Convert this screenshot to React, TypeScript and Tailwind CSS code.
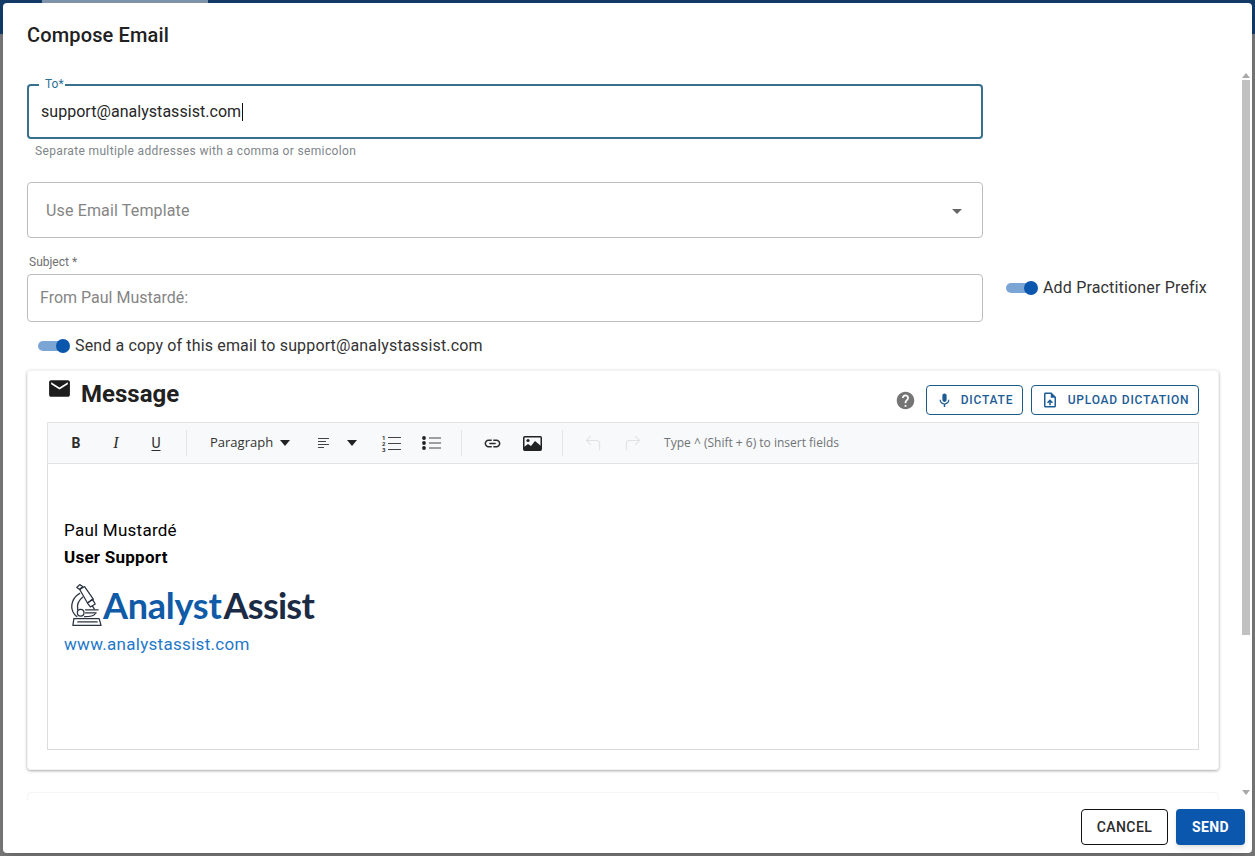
import type { ReactNode } from "react";
import { CornerUpLeft, CornerUpRight } from "lucide-react";
import {
  MdArrowDropDown,
  MdEmail,
  MdHelp,
  MdLink,
  MdMic,
  MdOutlineUploadFile,
} from "react-icons/md";

const Toggle = () => (
  <span className="relative flex h-[14px] w-[32px] shrink-0 items-center">
    <span className="h-[10px] w-[30px] rounded-full bg-[#7ba5d4]" />
    <span className="absolute right-0 top-0 h-[14px] w-[14px] rounded-full bg-[#0b57ad]" />
  </span>
);

const Divider = () => <span className="mx-[10px] h-[26px] w-px bg-[#e2e3e5]" />;

const ToolButton = ({ children }: { children: ReactNode }) => (
  <span className="flex h-10 w-10 items-center justify-center text-[#2b2b2b]">{children}</span>
);

const Caret = () => <span className="h-0 w-0 border-x-[5px] border-t-[6px] border-x-transparent border-t-[#222]" />;

const AlignIcon = () => (
  <svg width="12" height="10" viewBox="0 0 12 10" stroke="#444" strokeWidth="1">
    <path d="M0 .5h11M0 3.5h8M0 6.5h11M0 9.5h6" />
  </svg>
);

const NumberedIcon = () => (
  <svg width="19" height="17" viewBox="0 0 19 17">
    <text x="0" y="5" fontSize="6" fontWeight="700" fill="#333" fontFamily="Roboto, sans-serif">1</text>
    <text x="0" y="11" fontSize="6" fontWeight="700" fill="#333" fontFamily="Roboto, sans-serif">2</text>
    <text x="0" y="17" fontSize="6" fontWeight="700" fill="#333" fontFamily="Roboto, sans-serif">3</text>
    <path d="M6 2.500h13M6 8.500h13M6 14.500h13" stroke="#444" strokeWidth="1" />
  </svg>
);

const BulletIcon = () => (
  <svg width="19" height="14" viewBox="0 0 19 14">
    <circle cx="2" cy="2" r="1.9" fill="#222" />
    <circle cx="2" cy="7" r="1.9" fill="#222" />
    <circle cx="2" cy="12" r="1.9" fill="#222" />
    <path d="M7 2h12M7 7h12M7 12h12" stroke="#444" strokeWidth="1" />
  </svg>
);

const ImageIcon = () => (
  <svg width="19" height="15" viewBox="0 0 19 15">
    <rect x=".75" y=".75" width="17.5" height="13.5" rx="1" fill="none" stroke="#222" strokeWidth="1.5" />
    <circle cx="5" cy="4.5" r="1.6" fill="#222" />
    <path d="M1 14v-3l4-3 3 2 4-5 6 5v4z" fill="#222" />
  </svg>
);

const Microscope = () => (
  <svg width="33" height="46" viewBox="0 0 34 46" fill="none" stroke="#2b3442" strokeWidth="1.3" strokeLinejoin="round" strokeLinecap="round">
    <path d="M7 5l3-3 3 2-3 3z" />
    <path d="M10 7l5-3 9 13-6 4z" />
    <path d="M18 21l5-4 3 5-5 3z" />
    <path d="M23 24l2 3" />
    <path d="M10 11C3 15 0 23 3 30c1 2 2 4 4 5" />
    <path d="M13 15c-4 3-6 8-5 13" />
    <circle cx="11" cy="31" r="3.4" />
    <path d="M16 28h13M16 31h11" />
    <path d="M15 35c4 0 9 0 11-3" />
    <path d="M4 37h26l2 7H3z" />
    <path d="M8 40.500h20" />
  </svg>
);

const App = () => {
  return (
    <div className="relative h-[856px] w-full overflow-hidden bg-[#777777] p-[3px] font-['Roboto',sans-serif]">
      <div className="absolute inset-x-0 top-0 h-[34px] bg-[#123a66]" />
      <div className="absolute left-[42px] top-0 h-[3px] w-[166px] bg-[#7f93a8]" />

      <div className="relative flex h-[850px] flex-col rounded-[4px] bg-white shadow-lg">
        <header className="flex h-[67px] shrink-0 items-start pl-6 pt-[20px]">
          <h1 className="text-[20px] font-medium leading-6 tracking-[0.15px] text-[#212121]">Compose Email</h1>
        </header>

        <div className="flex h-[730px] shrink-0 overflow-hidden">
          <div className="flex-1 pl-6 pr-[21px]">
            <div className="flex items-start">
              <div className="w-[956px] pt-[14px]">
                <div className="relative flex h-[55px] items-center rounded-[4px] border-2 border-[#38708f] px-3 pt-[1px]">
                  <span className="absolute -top-[9px] left-[10px] bg-white pl-[6px] pr-[1px] text-xs leading-[14px] text-[#2f6f97]">To*</span>
                  <span className="text-base tracking-[0.04px] text-[#262626]">support@analystassist.com</span>
                  <span className="ml-px h-[18px] w-px bg-[#111]" />
                </div>
                <p className="mt-[5px] pl-2 text-xs leading-[14px] tracking-[0.35px] text-[#80858a]">
                  Separate multiple addresses with a comma or semicolon
                </p>
                <div className="mt-[24px] flex h-[56px] items-center justify-between rounded-[4px] border border-[#bdbdbd] pl-[18px] pr-[13px] pt-[1px]">
                  <span className="text-base tracking-[0.15px] text-[#858585]">Use Email Template</span>
                  <MdArrowDropDown className="text-[24px] text-[#666]" />
                </div>
                <p className="mt-[17px] pl-[2px] text-xs leading-[14px] text-[#707070]">Subject *</p>
                <div className="mt-[5px] flex h-[48px] items-center rounded-[4px] border border-[#bdbdbd] px-3">
                  <span className="text-base text-[#858585]">From Paul Mustardé:</span>
                </div>
              </div>
              <label className="ml-[23px] mt-[206px] flex items-center gap-[5px] text-base tracking-[0.17px] text-[#333]">
                <Toggle />
                <span className="whitespace-nowrap">Add Practitioner Prefix</span>
              </label>
            </div>

            <label className="ml-[11px] mt-[14px] flex h-[19px] items-center gap-[5px] text-base tracking-[0.15px] text-[#333]">
              <Toggle />
              <span>Send a copy of this email to support@analystassist.com</span>
            </label>

            <section className="mt-[15px] h-[400px] w-[1192px] rounded-[4px] border border-[#f3f3f3] px-[19px] shadow-[0_1px_3px_rgba(0,0,0,0.35)]">
              <div className="flex h-[51px] items-start">
                <MdEmail className="mt-[5px] text-[25px] text-[#1c1c1c]" />
                <h2 className="ml-[9px] mt-[7px] text-2xl font-bold leading-8 text-[#212121]">Message</h2>
                <MdHelp className="ml-auto mt-[19px] text-[21px] text-[#757575]" />
                <button className="ml-[10px] mt-[14px] flex h-[30px] w-[97px] items-center justify-center gap-[8px] rounded-[4px] border border-[#1c5a84] text-xs font-medium tracking-[0.8px] text-[#1d5c94]">
                  <MdMic className="text-[17px]" />
                  DICTATE
                </button>
                <button className="ml-2 mt-[14px] flex h-[30px] w-[168px] items-center justify-center gap-[9px] rounded-[4px] border border-[#1c5a84] text-xs font-medium tracking-[0.8px] text-[#1d5c94]">
                  <MdOutlineUploadFile className="text-[18px]" />
                  UPLOAD DICTATION
                </button>
              </div>

              <div className="flex h-[42px] items-center border border-[#e2e3e5] bg-[#f8f9fa] pl-2">
                <ToolButton><span className="text-sm font-bold">B</span></ToolButton>
                <ToolButton><span className="font-['Liberation_Serif',serif] text-base italic">I</span></ToolButton>
                <ToolButton><span className="text-sm underline underline-offset-2">U</span></ToolButton>
                <Divider />
                <span className="flex h-10 items-center gap-[7px] pl-[13px] font-['Open_Sans',sans-serif] text-[13px] text-[#333]">
                  Paragraph <Caret />
                </span>
                <span className="ml-[28px] flex items-center"><AlignIcon /></span>
                <span className="ml-[17px] flex items-center"><Caret /></span>
                <span className="ml-[14px]" />
                <ToolButton><NumberedIcon /></ToolButton>
                <ToolButton><BulletIcon /></ToolButton>
                <Divider />
                <ToolButton><MdLink className="text-[19px]" /></ToolButton>
                <ToolButton><ImageIcon /></ToolButton>
                <Divider />
                <ToolButton><CornerUpLeft size={20} strokeWidth={1.25} className="text-[#dfe1e3]" /></ToolButton>
                <ToolButton><CornerUpRight size={20} strokeWidth={1.25} className="text-[#dfe1e3]" /></ToolButton>
                <span className="-mt-px ml-[11px] font-['Open_Sans',sans-serif] text-xs text-[#6f7377]">Type ^ (Shift + 6) to insert fields</span>
              </div>

              <div className="h-[286px] border-x border-b border-[#dcdcdc] pl-4 pt-[53px] text-black">
                <p className="text-[17px] leading-[27px] tracking-[0.25px]">Paul Mustardé</p>
                <p className="text-[17px] font-bold leading-[27px] tracking-[0.25px]">User Support</p>
                <div className="mt-[11px] flex h-[46px] items-center pl-[6px] font-['Lato',sans-serif] text-[36px] font-bold leading-none tracking-[-0.25px]">
                  <Microscope />
                  <span className="text-[#0f5ba7]">Analyst</span>
                  <span className="ml-[2px] tracking-[-0.75px] text-[#1b2b45]">Assist</span>
                </div>
                <a className="mt-[3px] block text-[17px] leading-[26px] tracking-[0.3px] text-[#1f78c8]">www.analystassist.com</a>
              </div>
            </section>

            <div className="mt-[22px] h-40 w-[1192px] rounded-[4px] border border-[#f5f5f5]" />
          </div>

          <div className="flex w-[11px] shrink-0 flex-col items-center pr-px">
            <span className="mt-[3px] h-0 w-0 border-x-[4px] border-b-[5px] border-x-transparent border-b-[#a8a8a8]" />
            <span className="mt-[2px] h-[555px] w-[8px] bg-[#c1c1c1]" />
            <span className="mt-[155px] h-0 w-0 border-x-[4px] border-t-[5px] border-x-transparent border-t-[#a8a8a8]" />
          </div>
        </div>

        <footer className="flex flex-1 items-start justify-end gap-2 pr-[7px] pt-[9px]">
          <button className="h-9 w-[87px] rounded-[4px] border border-[#111] text-sm font-medium tracking-[0.4px] text-[#2b2b2b]">CANCEL</button>
          <button className="h-9 w-[69px] rounded-[4px] bg-[#0b57ad] text-sm font-bold tracking-[0.4px] text-white shadow-md">SEND</button>
        </footer>
      </div>
    </div>
  );
};

export default App;
